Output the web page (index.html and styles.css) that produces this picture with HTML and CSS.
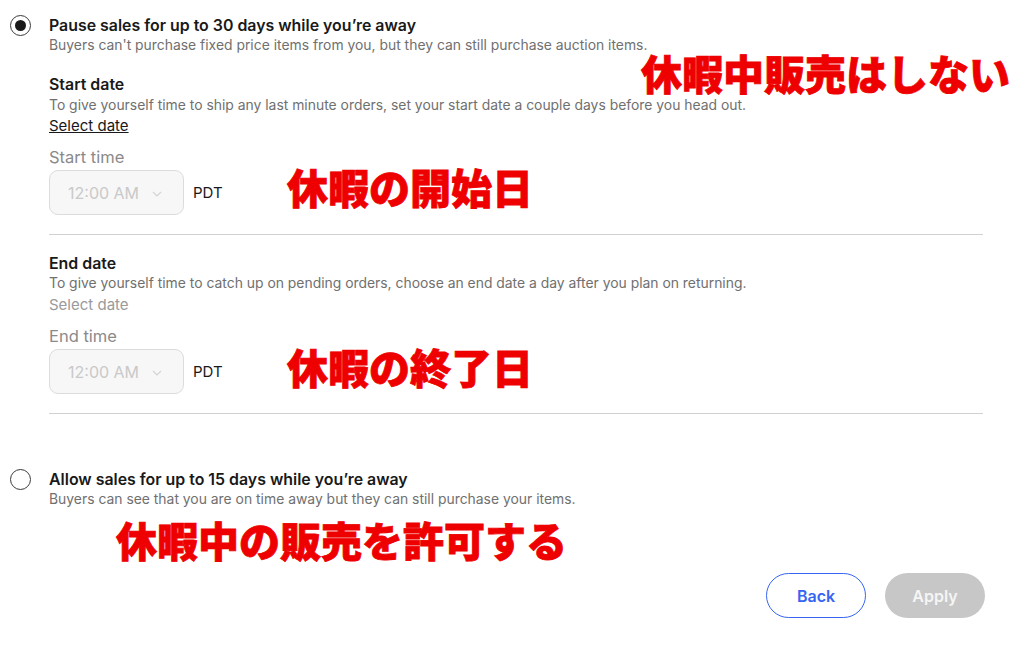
FILE: index.html
```html
<!DOCTYPE html>
<html lang="en">
<head>
<meta charset="utf-8">
<title>Time away</title>
<link rel="stylesheet" href="styles.css">
</head>
<body>
<main class="page">
  <section class="option">
    <span class="radio radio-on"></span>
    <div class="option-body">
      <div class="opt-title">Pause sales for up to 30 days while you’re away</div>
      <div class="opt-desc">Buyers can't purchase fixed price items from you, but they can still purchase auction items.</div>

      <div class="field">
        <div class="field-title">Start date</div>
        <div class="field-desc">To give yourself time to ship any last minute orders, set your start date a couple days before you head out.</div>
        <a class="select-date" href="#">Select date</a>
        <div class="time-label">Start time</div>
        <div class="time-row">
          <div class="time-select"><span>12:00 AM</span><svg class="chev" width="10" height="6" viewBox="0 0 10 6"><path d="M1 1l4 4 4-4" fill="none" stroke="#d4d4d4" stroke-width="1.2"/></svg></div>
          <span class="tz">PDT</span>
        </div>
      </div>

      <div class="field">
        <div class="field-title">End date</div>
        <div class="field-desc">To give yourself time to catch up on pending orders, choose an end date a day after you plan on returning.</div>
        <span class="select-date disabled">Select date</span>
        <div class="time-label">End time</div>
        <div class="time-row">
          <div class="time-select"><span>12:00 AM</span><svg class="chev" width="10" height="6" viewBox="0 0 10 6"><path d="M1 1l4 4 4-4" fill="none" stroke="#d4d4d4" stroke-width="1.2"/></svg></div>
          <span class="tz">PDT</span>
        </div>
      </div>
    </div>
  </section>

  <section class="option option-2">
    <span class="radio"></span>
    <div class="option-body">
      <div class="opt-title">Allow sales for up to 15 days while you’re away</div>
      <div class="opt-desc">Buyers can see that you are on time away but they can still purchase your items.</div>
    </div>
  </section>

  <div class="actions">
    <button class="btn btn-back">Back</button>
    <button class="btn btn-apply">Apply</button>
  </div>

  <div class="note note-1">休暇中販売はしない</div>
  <div class="note note-2">休暇の開始日</div>
  <div class="note note-3">休暇の終了日</div>
  <div class="note note-4">休暇中の販売を許可する</div>
</main>
</body>
</html>
```

FILE: styles.css
```css
* { box-sizing: border-box; }
html, body { margin: 0; padding: 0; background: #fff; }
body {
  font-family: Inter, "Liberation Sans", Arial, sans-serif;
  color: #191919;
  width: 1024px;
  height: 648px;
  overflow: hidden;
}
.page {
  position: relative;
  padding: 16px 39px 0 10px;
  height: 648px;
}
.option {
  display: flex;
  align-items: flex-start;
}
.radio {
  flex: none;
  width: 21px;
  height: 21px;
  border: 1.5px solid #3a3a3a;
  border-radius: 50%;
  margin-top: -1px;
  margin-right: 18px;
  display: flex;
  align-items: center;
  justify-content: center;
}
.radio-on::after {
  content: "";
  width: 11px;
  height: 11px;
  border-radius: 50%;
  background: #191919;
}
.option-body { flex: 1; padding-right: 2px; }
.opt-title {
  font-size: 15.9px;
  font-weight: 600;
  line-height: 20px;
  color: #191919;
}
.opt-desc {
  font-size: 13.9px;
  line-height: 18px;
  color: #707070;
}
.field {
  padding-top: 21px;
  padding-bottom: 19px;
  border-bottom: 1px solid #d0d0d0;
}
.field + .field { padding-top: 19px; }
.field-title {
  font-size: 15.9px;
  font-weight: 600;
  line-height: 20px;
}
.field-desc {
  font-size: 13.9px;
  line-height: 18px;
  color: #707070;
  margin-top: 1px;
}
.field + .field .field-desc { margin-top: 0; }
.select-date {
  display: block;
  font-size: 15px;
  line-height: 20px;
  margin-top: 2px;
  color: #191919;
  text-decoration: underline;
}
.select-date.disabled {
  color: #9a9a9a;
  text-decoration: none;
  margin-top: 3px;
}
.time-label {
  font-size: 16.5px;
  line-height: 20px;
  color: #8a8a8a;
  margin-top: 11px;
}
.time-row {
  display: flex;
  align-items: center;
  margin-top: 3px;
}
.time-select {
  width: 135px;
  height: 45px;
  border: 1.5px solid #dcdcdc;
  border-radius: 9px;
  background: #f7f7f7;
  display: flex;
  align-items: center;
  padding-left: 18px;
  font-size: 16px;
  color: #c9c9c9;
}
.chev { margin-left: 13px; margin-top: 2px; }
.tz {
  margin-left: 9px;
  font-size: 15px;
  color: #191919;
}
.option-2 { margin-top: 56px; }
.actions {
  display: flex;
  justify-content: flex-end;
  gap: 19px;
  margin-top: 65px;
}
.btn {
  width: 100px;
  height: 45px;
  border-radius: 23px;
  font-family: Inter, "Liberation Sans", Arial, sans-serif;
  font-size: 16px;
  font-weight: 600;
}
.btn-back {
  background: #fff;
  border: 1.5px solid #3665f3;
  color: #3665f3;
}
.btn-apply {
  background: #c7c7c7;
  border: none;
  color: #f5f5f5;
}
.note {
  position: absolute;
  font-family: "Noto Sans CJK JP", sans-serif;
  font-weight: 900;
  font-size: 41px;
  line-height: 41px;
  color: #ee0000;
  -webkit-text-stroke: 0.8px #ee0000;
  white-space: nowrap;
}
.note-1 { left: 641px; top: 52px; }
.note-2 { left: 287px; top: 166px; }
.note-3 { left: 287px; top: 346px; }
.note-4 { left: 116px; top: 519px; }
```
